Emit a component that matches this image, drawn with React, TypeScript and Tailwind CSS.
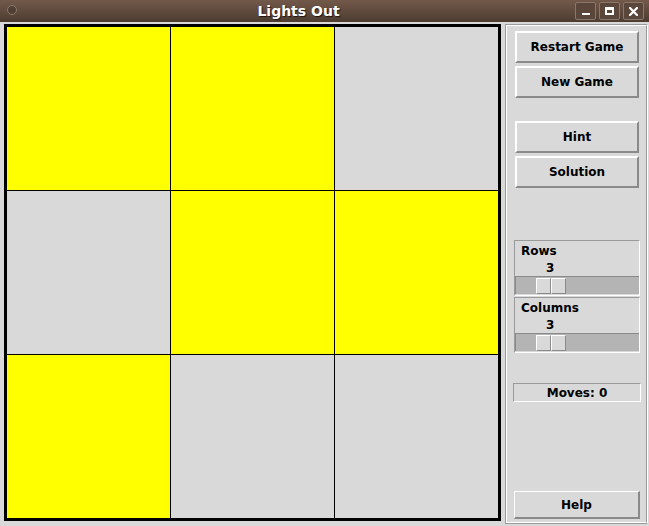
import React from "react";

const cells = [
  [true, true, false],
  [false, true, true],
  [true, false, false],
];

function RaisedButton({ label, className = "" }: { label: string; className?: string }) {
  return (
    <div
      className={`w-[124px] h-[32px] flex items-center justify-center bg-[#d9d9d9] border-t-2 border-l-2 border-b-2 border-r-2 border-t-white border-l-white border-b-[#8a8a8a] border-r-[#8a8a8a] text-[12px] font-bold text-black ${className}`}
    >
      {label}
    </div>
  );
}

function SliderFrame({ label, className = "" }: { label: string; className?: string }) {
  return (
    <div className={`ml-[7px] w-[126px] h-[56px] border border-t-[#9a9a9a] border-l-[#9a9a9a] border-b-white border-r-white flex flex-col ${className}`}>
      <div className="h-[19px] pl-[6px] pt-[3px] text-[12px] font-bold leading-[15px]">{label}</div>
      <div className="h-[17px] pl-[31px] pt-[1px] text-[12px] font-bold leading-[15px]">3</div>
      <div className="h-[18px] mb-[1px] bg-[#b4b4b4] border-l border-t border-[#8a8a8a] flex items-center">
        <div className="ml-[20px] w-[30px] h-[16px] flex">
          <div className="w-[15px] h-[16px] bg-[#d9d9d9] border-t border-l border-white border-r border-r-[#8a8a8a] border-b border-b-[#8a8a8a]" />
          <div className="w-[15px] h-[16px] bg-[#d9d9d9] border-t border-l border-white border-r border-r-[#8a8a8a] border-b border-b-[#8a8a8a]" />
        </div>
      </div>
    </div>
  );
}

export default function App() {
  return (
    <div
      className="w-[649px] h-[526px] bg-[#d9d9d9] flex flex-col overflow-hidden"
      style={{ fontFamily: '"DejaVu Sans", sans-serif' }}
    >
      {/* Title bar */}
      <div className="relative h-[22px] bg-gradient-to-b from-[#72594a] to-[#4e3c31] flex items-center justify-center pr-[52px] shrink-0">
        <div className="absolute left-[7px] top-[5px] w-[10px] h-[10px] rounded-full border border-[#8d7a6e] bg-[#4f3f35]" />
        <span className="text-white font-bold text-[14px] [text-shadow:1px_1px_1px_#1e1510]">Lights Out</span>
        <div className="absolute right-[5px] top-[2px] flex gap-[3px]">
          <div className="w-[21px] h-[18px] rounded-[2px] border border-[#8b7668] bg-[#5a463a] flex items-end justify-center pb-[4px]">
            <div className="w-[8px] h-[2px] bg-white" />
          </div>
          <div className="w-[21px] h-[18px] rounded-[2px] border border-[#8b7668] bg-[#5a463a] flex items-center justify-center">
            <div className="w-[9px] h-[8px] border-2 border-white border-t-[3px]" />
          </div>
          <div className="w-[21px] h-[18px] rounded-[2px] border border-[#8b7668] bg-[#5a463a] flex items-center justify-center">
            <svg width="9" height="9" viewBox="0 0 9 9">
              <path d="M1 1 L8 8 M8 1 L1 8" stroke="white" strokeWidth="2.2" strokeLinecap="square" />
            </svg>
          </div>
        </div>
      </div>

      <div className="flex pt-[2px]">
        {/* Board */}
        <div className="ml-[4px] w-[497px] h-[497px] border-[3px] border-black bg-black grid grid-cols-3 gap-px">
          {cells.flat().map((on, i) => (
            <div key={i} className={on ? "bg-[#ffff00]" : "bg-[#d9d9d9]"} />
          ))}
        </div>

        {/* Right panel */}
        <div className="ml-[4px] w-[143px] h-[500px] border border-t-[#9a9a9a] border-l-[#9a9a9a] border-b-[#9a9a9a] border-r-white">
          <div className="w-full h-full border border-white border-r-[#9a9a9a] border-b-white flex flex-col">
            <RaisedButton label="Restart Game" className="ml-[8px] mt-[5px]" />
            <RaisedButton label="New Game" className="ml-[8px] mt-[3px]" />
            <RaisedButton label="Hint" className="ml-[8px] mt-[23px]" />
            <RaisedButton label="Solution" className="ml-[8px] mt-[3px]" />
            <SliderFrame label="Rows" className="mt-[52px]" />
            <SliderFrame label="Columns" className="mt-[1px]" />
            <div className="ml-[6px] mt-[30px] w-[128px] h-[19px] border border-t-[#9a9a9a] border-l-[#9a9a9a] border-b-white border-r-white flex items-center justify-center text-[12px] font-bold">
              Moves: 0
            </div>
            <div className="ml-[7px] mt-[89px] w-[126px] h-[28px] border border-t-white border-l-white border-b-2 border-r-2 border-b-[#8a8a8a] border-r-[#8a8a8a] flex items-center justify-center text-[12px] font-bold">
              Help
            </div>
          </div>
        </div>
      </div>
    </div>
  );
}
